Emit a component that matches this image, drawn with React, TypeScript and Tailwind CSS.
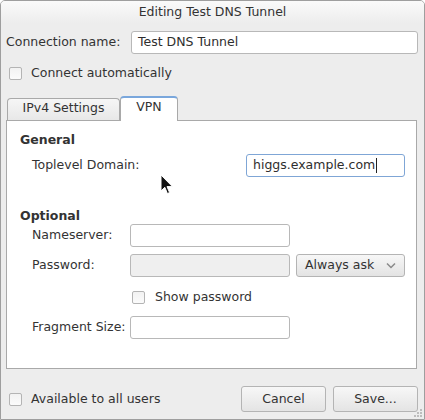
import React from 'react';

const Checkbox = () => (
  <span className="inline-block w-[13px] h-[13px] shrink-0 rounded-[2px] border border-[#b4b4b4] bg-gradient-to-b from-[#f2f2f2] to-[#fbfbfb]" />
);

const Entry = ({ value, className = '', focused = false, disabled = false }: { value?: string; className?: string; focused?: boolean; disabled?: boolean }) => (
  <div
    className={`h-[23px] rounded-[3px] border flex items-center px-[6px] ${
      focused ? 'border-[#7fa6d6]' : 'border-[#b8b8b8]'
    } ${disabled ? 'bg-[#efefef]' : 'bg-white'} ${className}`}
  >
    {value && <span className="text-[#2e2e2e] leading-none">{value}</span>}
    {focused && <span className="w-px h-[15px] bg-[#222] ml-px" />}
  </div>
);

const Button = ({ label, className = '' }: { label: string; className?: string }) => (
  <div className={`h-[26px] rounded-[3px] border border-[#b4b4b4] bg-gradient-to-b from-[#f7f7f7] to-[#e4e4e4] flex items-center justify-center ${className}`}>
    {label}
  </div>
);

export default function App() {
  return (
    <div className="relative w-[425px] h-[420px] bg-[#ededed] border border-[#9e9e9e] rounded-t-[5px] font-['DejaVu_Sans',sans-serif] text-[12.5px] text-[#333] flex flex-col overflow-hidden">
      {/* Title bar */}
      <div className="h-[22px] shrink-0 flex items-center justify-center bg-gradient-to-b from-[#fafafa] to-[#ededed]">
        Editing Test DNS Tunnel
      </div>

      {/* Connection name */}
      <div className="mt-[8px] flex items-center pl-[5px] pr-[6px]">
        <span>Connection name:</span>
        <Entry value="Test DNS Tunnel" className="ml-auto w-[287px]" />
      </div>

      <div className="mt-[9px] h-[20px] flex items-center pl-[8px] gap-[9px]">
        <Checkbox />
        <span>Connect automatically</span>
      </div>

      {/* Tabs */}
      <div className="mt-[12px] mx-[5px] flex flex-col">
        <div className="flex items-end pl-[1px] h-[25px]">
          <div className="h-[23px] w-[113px] -mb-px rounded-t-[4px] border border-[#a9a9a9] border-b-0 bg-gradient-to-b from-[#f6f6f6] to-[#e7e7e7] flex items-center justify-center pb-[4px]">
            IPv4 Settings
          </div>
          <div className="relative z-10 h-[25px] w-[58px] -mb-px rounded-t-[4px] border border-[#a9a9a9] border-t-[2px] border-t-[#7aa7dc] border-b-0 bg-white flex items-center justify-center pb-[4px]">
            VPN
          </div>
        </div>
        <div className="h-[249px] w-[411px] border border-[#a9a9a9] bg-white flex flex-col pl-[13px]">
          <div className="mt-[10px] h-[18px] flex items-center font-bold">General</div>
          <div className="mt-[5px] flex items-center pl-[12px]">
            <span>Toplevel Domain:</span>
            <Entry value="higgs.example.com" focused className="ml-auto mr-[11px] w-[159px]" />
          </div>

          <div className="mt-[32px] h-[14px] flex items-center font-bold">Optional</div>
          <div className="mt-[1px] flex items-center pl-[12px]">
            <span className="w-[98px]">Nameserver:</span>
            <Entry className="w-[160px]" />
          </div>
          <div className="mt-[7px] flex items-center pl-[12px]">
            <span className="w-[98px]">Password:</span>
            <Entry disabled className="w-[160px]" />
            <div className="ml-[6px] w-[109px] h-[23px] rounded-[3px] border border-[#b4b4b4] bg-gradient-to-b from-[#f7f7f7] to-[#e3e3e3] flex items-center pl-[8px] pr-[8px]">
              <span>Always ask</span>
              <svg className="ml-auto" width="10" height="7" viewBox="0 0 10 7">
                <path d="M1 1.5 L5 5.5 L9 1.5" fill="none" stroke="#8a8a8a" strokeWidth="1.5" />
              </svg>
            </div>
          </div>
          <div className="mt-[8px] h-[24px] flex items-center pl-[112px] gap-[10px]">
            <Checkbox />
            <span>Show password</span>
          </div>
          <div className="mt-[7px] flex items-center pl-[12px]">
            <span className="w-[98px]">Fragment Size:</span>
            <Entry className="w-[160px]" />
          </div>
        </div>
      </div>

      {/* Bottom row */}
      <div className="mt-[17px] flex items-center pl-[8px] pr-[6px]">
        <Checkbox />
        <span className="ml-[9px]">Available to all users</span>
        <Button label="Cancel" className="ml-auto w-[85px]" />
        <Button label="Save..." className="ml-[7px] w-[85px]" />
      </div>

      {/* Resize grip */}
      <svg className="absolute right-[1px] bottom-[1px]" width="9" height="9" viewBox="0 0 9 9">
        <rect x="6" y="0" width="2" height="2" fill="#bdbdbd" />
        <rect x="3" y="3" width="2" height="2" fill="#bdbdbd" />
        <rect x="6" y="3" width="2" height="2" fill="#bdbdbd" />
        <rect x="0" y="6" width="2" height="2" fill="#bdbdbd" />
        <rect x="3" y="6" width="2" height="2" fill="#bdbdbd" />
        <rect x="6" y="6" width="2" height="2" fill="#bdbdbd" />
      </svg>

      {/* Mouse pointer */}
      <svg className="absolute left-[159px] top-[173px]" width="15" height="23" viewBox="0 0 15 23">
        <path d="M1 1 L1 17 L4.8 13.3 L7.4 19.5 L9.6 18.6 L7 12.6 L12.4 12.6 Z" fill="#111" stroke="#fff" strokeWidth="1" />
      </svg>
    </div>
  );
}
